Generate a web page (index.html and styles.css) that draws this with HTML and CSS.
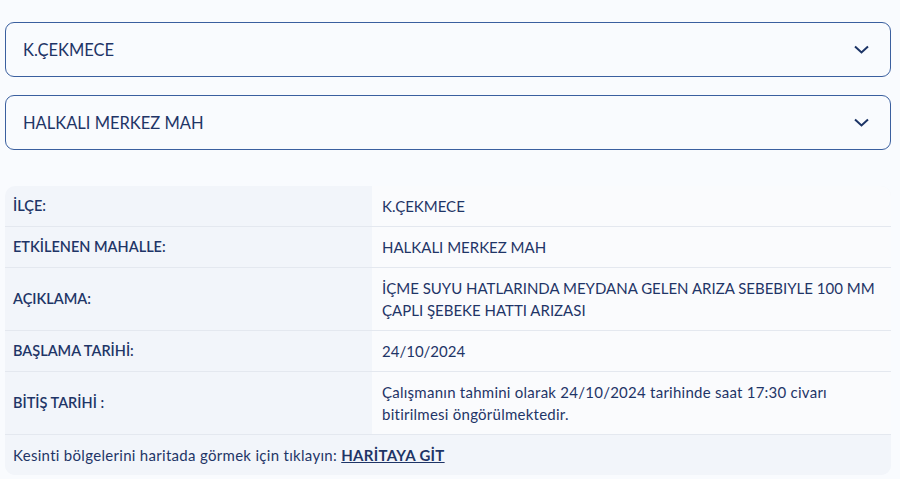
FILE: index.html
```html
<!DOCTYPE html>
<html lang="tr">
<head>
  <meta charset="UTF-8" />
  <meta name="viewport" content="width=device-width, initial-scale=1" />
  <title>Kesinti Bilgisi</title>
  <link rel="stylesheet" href="styles.css">
</head>
<body>

  <div class="page">
    <div class="select">
      <span>K.ÇEKMECE</span>
      <svg class="chevron" width="15" height="9" viewBox="0 0 15 9"><polyline points="1,1.5 7.5,7.5 14,1.5" /></svg>
    </div>
    <div class="select">
      <span>HALKALI MERKEZ MAH</span>
      <svg class="chevron" width="15" height="9" viewBox="0 0 15 9"><polyline points="1,1.5 7.5,7.5 14,1.5" /></svg>
    </div>

    <table class="info">
      <tr>
        <th>İLÇE:</th>
        <td>K.ÇEKMECE</td>
      </tr>
      <tr>
        <th>ETKİLENEN MAHALLE:</th>
        <td>HALKALI MERKEZ MAH</td>
      </tr>
      <tr>
        <th>AÇIKLAMA:</th>
        <td>İÇME SUYU HATLARINDA MEYDANA GELEN ARIZA SEBEBIYLE 100 MM ÇAPLI ŞEBEKE HATTI ARIZASI</td>
      </tr>
      <tr>
        <th>BAŞLAMA TARİHİ:</th>
        <td>24/10/2024</td>
      </tr>
      <tr>
        <th>BİTİŞ TARİHİ :</th>
        <td class="sentence">Çalışmanın tahmini olarak 24/10/2024 tarihinde saat 17:30 civarı bitirilmesi öngörülmektedir.</td>
      </tr>
      <tr class="footer">
        <td colspan="2">Kesinti bölgelerini haritada görmek için tıklayın: <a href="#">HARİTAYA GİT</a></td>
      </tr>
    </table>
  </div>

</body>
</html>
```

FILE: styles.css
```css
html, body {
  margin: 0;
  padding: 0;
  background: #f9fbfe;
  font-family: Lato, 'Open Sans', sans-serif;
  color: #1f3567;
}

.page {
  width: 886px;
  padding: 22px 0 0 5px;
}

.select {
  height: 53px;
  border: 1px solid #3a5f9f;
  border-radius: 9px;
  display: flex;
  align-items: center;
  justify-content: space-between;
  padding: 0 21px 0 17px;
  margin-bottom: 18px;
  font-size: 16.5px;
}

.chevron polyline {
  fill: none;
  stroke: #1c3466;
  stroke-width: 2;
}

.info {
  width: 100%;
  margin-top: 36px;
  border-collapse: collapse;
  background: #f2f5fa;
  border-radius: 10px;
  overflow: hidden;
  font-size: 15px;
  line-height: 22px;
}

.info th, .info td {
  text-align: left;
  padding: 9px 8px;
  border-bottom: 1px solid #e4e8ef;
  vertical-align: middle;
}

.info th {
  width: 351px;
  font-weight: 600;
  font-size: 14.5px;
}

.info td {
  background: #fafbfd;
  padding-left: 10px;
  padding-right: 6px;
}

.info td.sentence {
  letter-spacing: 0.25px;
}

.info tr:last-child td {
  border-bottom: none;
}

.info .footer td {
  background: #f2f5fa;
  padding-left: 8px;
  letter-spacing: 0.3px;
}

.footer a {
  color: #1f3567;
  font-weight: 700;
}
```
